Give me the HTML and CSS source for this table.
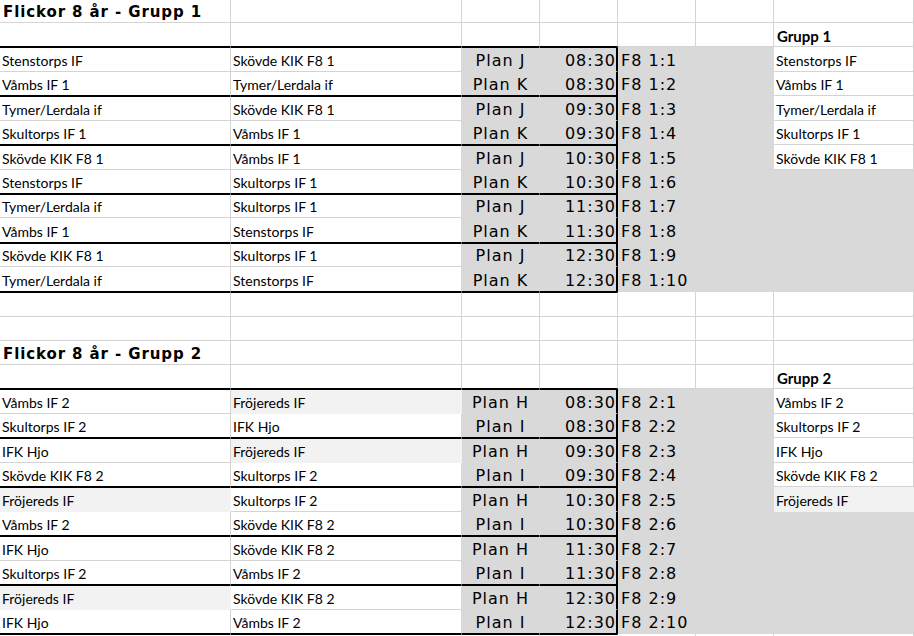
FILE: index.html
```html
<!DOCTYPE html>
<html lang="sv">
<head>
<meta charset="utf-8">
<title>Flickor 8 år</title>
<link rel="stylesheet" href="styles.css">
</head>
<body>
<div class="sheet">
  <!-- row 1 -->
  <div class="row h23">
    <div class="cell title">Flickor 8 år - Grupp 1</div><div class="cell"></div><div class="cell"></div><div class="cell"></div><div class="cell"></div><div class="cell"></div><div class="cell"></div>
  </div>
  <!-- row 2 -->
  <div class="row h24">
    <div class="cell bo"></div><div class="cell bo"></div><div class="cell bo"></div><div class="cell bo"></div><div class="cell"></div><div class="cell"></div><div class="cell head">Grupp 1</div>
  </div>
  <!-- group 1 matches -->
  <div class="row h25">
    <div class="cell to">Stenstorps IF</div><div class="cell to nf">Skövde KIK F8 1</div><div class="cell fill to plan">Plan J</div><div class="cell fill to time edge">08:30</div><div class="cell fill code">F8 1:1</div><div class="cell fill"></div><div class="cell">Stenstorps IF</div>
  </div>
  <div class="row h24">
    <div class="cell bo">Våmbs IF 1</div><div class="cell bo nf">Tymer/Lerdala if</div><div class="cell fill bo plan">Plan K</div><div class="cell fill bo time edge">08:30</div><div class="cell fill code">F8 1:2</div><div class="cell fill"></div><div class="cell">Våmbs IF 1</div>
  </div>
  <div class="row h25">
    <div class="cell to">Tymer/Lerdala if</div><div class="cell to nf">Skövde KIK F8 1</div><div class="cell fill to plan">Plan J</div><div class="cell fill to time edge">09:30</div><div class="cell fill code">F8 1:3</div><div class="cell fill"></div><div class="cell">Tymer/Lerdala if</div>
  </div>
  <div class="row h24">
    <div class="cell bo">Skultorps IF 1</div><div class="cell bo nf">Våmbs IF 1</div><div class="cell fill bo plan">Plan K</div><div class="cell fill bo time edge">09:30</div><div class="cell fill code">F8 1:4</div><div class="cell fill"></div><div class="cell">Skultorps IF 1</div>
  </div>
  <div class="row h25">
    <div class="cell to">Skövde KIK F8 1</div><div class="cell to nf">Våmbs IF 1</div><div class="cell fill to plan">Plan J</div><div class="cell fill to time edge">10:30</div><div class="cell fill code">F8 1:5</div><div class="cell fill"></div><div class="cell">Skövde KIK F8 1</div>
  </div>
  <div class="row h24">
    <div class="cell bo">Stenstorps IF</div><div class="cell bo nf">Skultorps IF 1</div><div class="cell fill bo plan">Plan K</div><div class="cell fill bo time edge">10:30</div><div class="cell fill code">F8 1:6</div><div class="cell fill"></div><div class="cell fill"></div>
  </div>
  <div class="row h24">
    <div class="cell to">Tymer/Lerdala if</div><div class="cell to nf">Skultorps IF 1</div><div class="cell fill to plan">Plan J</div><div class="cell fill to time edge">11:30</div><div class="cell fill code">F8 1:7</div><div class="cell fill"></div><div class="cell fill"></div>
  </div>
  <div class="row h25">
    <div class="cell bo">Våmbs IF 1</div><div class="cell bo nf">Stenstorps IF</div><div class="cell fill bo plan">Plan K</div><div class="cell fill bo time edge">11:30</div><div class="cell fill code">F8 1:8</div><div class="cell fill"></div><div class="cell fill"></div>
  </div>
  <div class="row h24">
    <div class="cell to">Skövde KIK F8 1</div><div class="cell to nf">Skultorps IF 1</div><div class="cell fill to plan">Plan J</div><div class="cell fill to time edge">12:30</div><div class="cell fill code">F8 1:9</div><div class="cell fill"></div><div class="cell fill"></div>
  </div>
  <div class="row h25">
    <div class="cell bo">Tymer/Lerdala if</div><div class="cell bo nf">Stenstorps IF</div><div class="cell fill bo plan">Plan K</div><div class="cell fill bo time edge">12:30</div><div class="cell fill code">F8 1:10</div><div class="cell fill"></div><div class="cell fill"></div>
  </div>
  <!-- spacer rows -->
  <div class="row h25">
    <div class="cell to"></div><div class="cell to"></div><div class="cell to"></div><div class="cell to"></div><div class="cell"></div><div class="cell"></div><div class="cell"></div>
  </div>
  <div class="row h24">
    <div class="cell"></div><div class="cell"></div><div class="cell"></div><div class="cell"></div><div class="cell"></div><div class="cell"></div><div class="cell"></div>
  </div>
  <div class="row h24">
    <div class="cell title">Flickor 8 år - Grupp 2</div><div class="cell"></div><div class="cell"></div><div class="cell"></div><div class="cell"></div><div class="cell"></div><div class="cell"></div>
  </div>
  <div class="row h24">
    <div class="cell bo"></div><div class="cell bo"></div><div class="cell bo"></div><div class="cell bo"></div><div class="cell"></div><div class="cell"></div><div class="cell head">Grupp 2</div>
  </div>
  <!-- group 2 matches -->
  <div class="row h25">
    <div class="cell to">Våmbs IF 2</div><div class="cell soft to">Fröjereds IF</div><div class="cell fill to plan">Plan H</div><div class="cell fill to time edge">08:30</div><div class="cell fill code">F8 2:1</div><div class="cell fill"></div><div class="cell">Våmbs IF 2</div>
  </div>
  <div class="row h24">
    <div class="cell bo">Skultorps IF 2</div><div class="cell bo nf">IFK Hjo</div><div class="cell fill bo plan">Plan I</div><div class="cell fill bo time edge">08:30</div><div class="cell fill code">F8 2:2</div><div class="cell fill"></div><div class="cell">Skultorps IF 2</div>
  </div>
  <div class="row h25">
    <div class="cell to">IFK Hjo</div><div class="cell soft to">Fröjereds IF</div><div class="cell fill to plan">Plan H</div><div class="cell fill to time edge">09:30</div><div class="cell fill code">F8 2:3</div><div class="cell fill"></div><div class="cell">IFK Hjo</div>
  </div>
  <div class="row h24">
    <div class="cell bo">Skövde KIK F8 2</div><div class="cell bo nf">Skultorps IF 2</div><div class="cell fill bo plan">Plan I</div><div class="cell fill bo time edge">09:30</div><div class="cell fill code">F8 2:4</div><div class="cell fill"></div><div class="cell">Skövde KIK F8 2</div>
  </div>
  <div class="row h25">
    <div class="cell soft to">Fröjereds IF</div><div class="cell to nf">Skultorps IF 2</div><div class="cell fill to plan">Plan H</div><div class="cell fill to time edge">10:30</div><div class="cell fill code">F8 2:5</div><div class="cell fill"></div><div class="cell soft">Fröjereds IF</div>
  </div>
  <div class="row h24">
    <div class="cell bo">Våmbs IF 2</div><div class="cell bo nf">Skövde KIK F8 2</div><div class="cell fill bo plan">Plan I</div><div class="cell fill bo time edge">10:30</div><div class="cell fill code">F8 2:6</div><div class="cell fill"></div><div class="cell fill"></div>
  </div>
  <div class="row h25">
    <div class="cell to">IFK Hjo</div><div class="cell to nf">Skövde KIK F8 2</div><div class="cell fill to plan">Plan H</div><div class="cell fill to time edge">11:30</div><div class="cell fill code">F8 2:7</div><div class="cell fill"></div><div class="cell fill"></div>
  </div>
  <div class="row h24">
    <div class="cell bo">Skultorps IF 2</div><div class="cell bo nf">Våmbs IF 2</div><div class="cell fill bo plan">Plan I</div><div class="cell fill bo time edge">11:30</div><div class="cell fill code">F8 2:8</div><div class="cell fill"></div><div class="cell fill"></div>
  </div>
  <div class="row h25">
    <div class="cell soft to">Fröjereds IF</div><div class="cell to nf">Skövde KIK F8 2</div><div class="cell fill to plan">Plan H</div><div class="cell fill to time edge">12:30</div><div class="cell fill code">F8 2:9</div><div class="cell fill"></div><div class="cell fill"></div>
  </div>
  <div class="row h24">
    <div class="cell bo">IFK Hjo</div><div class="cell bo nf">Våmbs IF 2</div><div class="cell fill bo plan">Plan I</div><div class="cell fill bo time edge">12:30</div><div class="cell fill code">F8 2:10</div><div class="cell fill"></div><div class="cell fill"></div>
  </div>
  <div class="row h24">
    <div class="cell to"></div><div class="cell to"></div><div class="cell to"></div><div class="cell to"></div><div class="cell"></div><div class="cell"></div><div class="cell"></div>
  </div>
</div>
</body>
</html>
```

FILE: styles.css
```css
* {
  box-sizing: border-box;
  margin: 0;
  padding: 0;
}

html,
body {
  background: #ffffff;
}

body {
  width: 914px;
  height: 636px;
  overflow: hidden;
  font-family: "Lato", "Liberation Sans", sans-serif;
  font-size: 14px;
  color: #000000;
}

.sheet {
  display: flex;
  flex-direction: column;
}

.row {
  display: grid;
  grid-template-columns: 231px 231px 78px 78px 78px 78px 140px;
}

.h23 { height: 23px; }
.h24 { height: 24px; }
.h25 { height: 25px; }

.cell {
  display: flex;
  align-items: flex-end;
  padding: 0 2px 1px 2px;
  line-height: 18px;
  white-space: nowrap;
  border-right: 1px solid #d4d4d4;
  border-bottom: 1px solid #d4d4d4;
}

.title {
  font-family: "DejaVu Sans", Verdana, sans-serif;
  font-weight: bold;
  font-size: 15px;
  letter-spacing: 0.9px;
  padding-left: 3px;
  padding-bottom: 1px;
}

.head {
  font-weight: bold;
  font-size: 15px;
  padding-left: 3px;
}

.plan,
.time,
.code {
  font-family: "DejaVu Sans", Verdana, sans-serif;
  font-size: 16px;
  letter-spacing: 1px;
  line-height: 19px;
  padding-bottom: 1px;
}

.plan {
  justify-content: center;
}

.time {
  justify-content: flex-end;
  padding-right: 0;
}

.code {
  padding-left: 3px;
}

.fill {
  background: #d9d9d9;
  border-color: #d9d9d9;
}

.soft {
  background: #f2f2f2;
  border-color: #f2f2f2;
}

.nf {
  border-right-color: #d9d9d9;
}

.to {
  border-top: 1px solid #000000;
}

.bo {
  border-bottom-color: #000000;
}

.edge {
  border-right: 2px solid #000000;
}
```
